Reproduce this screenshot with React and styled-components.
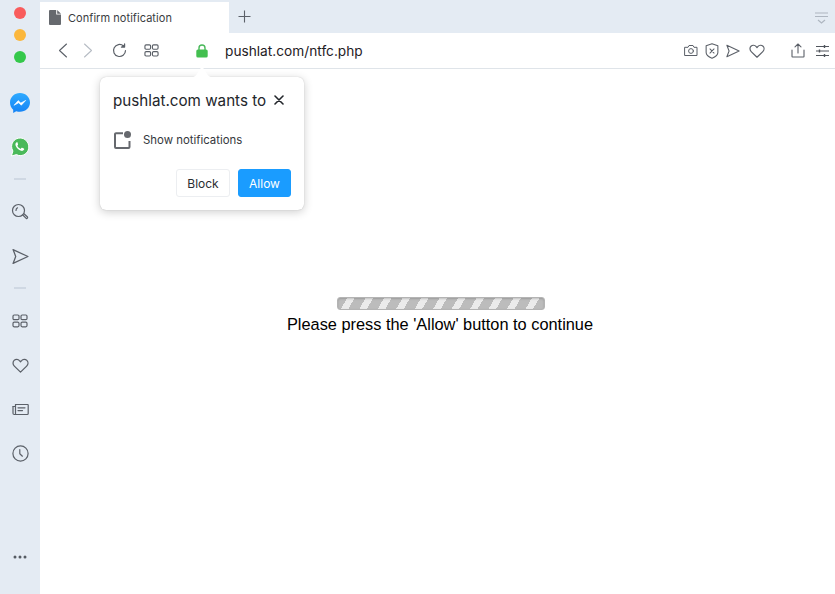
import React from "react";
import styled, { createGlobalStyle } from "styled-components";

const Global = createGlobalStyle`
  html, body { margin: 0; padding: 0; background: #fff; }
  body { font-family: Inter, "Liberation Sans", sans-serif; }
  #root { width: 835px; height: 594px; overflow: hidden; }
`;

const Shell = styled.div`
  display: flex;
  width: 835px;
  height: 594px;
  background: #fff;
`;

const Sidebar = styled.aside`
  width: 40px;
  flex: none;
  height: 594px;
  background: #e4ebf3;
  display: flex;
  flex-direction: column;
  align-items: center;
  padding-top: 7px;
  box-sizing: border-box;
`;

const Lights = styled.div`
  display: flex;
  flex-direction: column;
  gap: 10px;
  flex: none;
`;

const Light = styled.span`
  display: block;
  width: 12px;
  height: 12px;
  border-radius: 50%;
  background: ${(p) => p.$color};
`;

const SideSlot = styled.div`
  width: 40px;
  height: 24px;
  flex: none;
  display: flex;
  align-items: center;
  justify-content: center;
  margin-top: ${(p) => p.$top ?? 20}px;
`;

const Dash = styled.span`
  width: 12px;
  height: 2px;
  background: #cfd8e3;
  flex: none;
  margin-top: ${(p) => p.$top}px;
`;

const Main = styled.div`
  flex: 1;
  display: flex;
  flex-direction: column;
  min-width: 0;
`;

const TabBar = styled.div`
  height: 33px;
  flex: none;
  background: #e4ebf3;
  display: flex;
  align-items: flex-end;
`;

const Tab = styled.div`
  width: 189px;
  height: 31px;
  background: #fff;
  display: flex;
  align-items: center;
  padding-left: 9px;
  gap: 7px;
  box-sizing: border-box;
  font-size: 11px;
  color: #3a3d42;
  letter-spacing: 0.05px;
`;

const NewTab = styled.div`
  width: 31px;
  height: 31px;
  padding-bottom: 3px;
  box-sizing: border-box;
  display: flex;
  align-items: center;
  justify-content: center;
`;

const TabMenu = styled.div`
  margin-left: auto;
  margin-right: 6px;
  height: 31px;
  display: flex;
  align-items: center;
`;

const Toolbar = styled.div`
  height: 36px;
  flex: none;
  box-sizing: border-box;
  border-bottom: 1px solid #dfe4e9;
  display: flex;
  align-items: center;
  padding-left: 15px;
  padding-right: 6px;
`;

const ToolIcon = styled.div`
  display: flex;
  align-items: center;
  justify-content: center;
  width: ${(p) => p.$w ?? 16}px;
  height: 18px;
  flex: none;
  margin-right: ${(p) => p.$mr ?? 0}px;
`;

const Address = styled.div`
  font-size: 13.7px;
  color: #1e2024;
  flex: 1;
  margin-left: 17px;
`;

const Content = styled.main`
  flex: 1;
  position: relative;
  display: flex;
  flex-direction: column;
  align-items: center;
  padding-top: 228px;
  padding-left: 7px;
  font-family: "Liberation Sans", Arial, sans-serif;
`;

const Progress = styled.div`
  width: 208px;
  height: 13px;
  box-sizing: border-box;
  border: 1px solid #b4b4b4;
  border-radius: 3px;
  background: repeating-linear-gradient(-60deg, #bcbcbc 0 9.5px, #ebebeb 9.5px 16px);
  box-shadow: inset 0 1px 2px rgba(0, 0, 0, 0.18);
`;

const Message = styled.div`
  font-size: 16.35px;
  line-height: 18px;
  color: #000;
  margin-top: 5px;
  margin-left: -2px;
`;

const Popup = styled.div`
  position: absolute;
  left: 60px;
  top: 8px;
  width: 204px;
  height: 133px;
  box-sizing: border-box;
  background: #fff;
  border-radius: 6px;
  box-shadow: 0 2px 10px rgba(0, 0, 0, 0.2), 0 0 1px rgba(0, 0, 0, 0.25);
  padding: 13px;
  display: flex;
  flex-direction: column;
  font-family: Inter, "Liberation Sans", sans-serif;
`;

const Arrow = styled.svg`
  position: absolute;
  left: 86px;
  top: -12px;
`;

const PopupHead = styled.div`
  display: flex;
  align-items: center;
  justify-content: space-between;
  height: 20px;
  padding-right: 7px;
  font-size: 15.2px;
  color: #23262b;
`;

const Permission = styled.div`
  display: flex;
  align-items: center;
  gap: 12px;
  margin-top: 20px;
  height: 20px;
  margin-left: 1px;
  font-size: 11.4px;
  color: #34373c;
`;

const Actions = styled.div`
  margin-top: auto;
  display: flex;
  justify-content: flex-end;
  gap: 8px;
`;

const Btn = styled.button`
  height: 28px;
  width: ${(p) => (p.$primary ? 53 : 54)}px;
  padding: 0;
  border-radius: 3px;
  box-sizing: border-box;
  border: 1px solid ${(p) => (p.$primary ? "#1a9cff" : "#eceef1")};
  background: ${(p) => (p.$primary ? "#1a9cff" : "#fff")};
  color: ${(p) => (p.$primary ? "#fff" : "#2a2d31")};
  font-family: inherit;
  font-size: 12px;
`;

const S = { fill: "none", stroke: "#5b6068", strokeWidth: 1.2, strokeLinecap: "round", strokeLinejoin: "round" };

const Send = ({ size = 16 }) => (
  <svg width={size} height={size} viewBox="0 0 16 16" {...S}>
    <path d="M1 1.5 15 8 1 14.5 3.5 8Z" />
  </svg>
);
const Heart = ({ size = 16 }) => (
  <svg width={size} height={size} viewBox="0 0 16 16" {...S}>
    <path d="M8 14.2 2.2 8.6C.6 7 .6 4.6 2 3.2c1.5-1.4 3.8-1.2 5 .2l1 1.1 1-1.1c1.2-1.4 3.5-1.6 5-.2 1.4 1.4 1.4 3.8-.2 5.4Z" />
  </svg>
);
const Grid = ({ size = 16 }) => (
  <svg width={size} height={size} viewBox="0 0 16 16" {...S}>
    <rect x="1" y="2" width="6" height="4.6" rx="1.2" />
    <rect x="9" y="2" width="6" height="4.6" rx="1.2" />
    <rect x="1" y="9.2" width="6" height="4.6" rx="1.2" />
    <rect x="9" y="9.2" width="6" height="4.6" rx="1.2" />
  </svg>
);

export default function App() {
  return (
    <>
      <Global />
      <Shell>
        <Sidebar>
          <Lights>
            <Light $color="#f95c5c" />
            <Light $color="#fbb73c" />
            <Light $color="#34c84a" />
          </Lights>
          <SideSlot $top={28}>
            <svg width="20" height="20" viewBox="0 0 20 20">
              <defs>
                <linearGradient id="ms" x1="0" y1="0" x2="0" y2="1">
                  <stop offset="0" stopColor="#2eaaff" />
                  <stop offset="1" stopColor="#1583f5" />
                </linearGradient>
              </defs>
              <path d="M10 0C4.4 0 0 4.1 0 9.6c0 2.9 1.2 5.4 3.2 7.1v3.2l3-1.7c1.2.4 2.5.6 3.8.6 5.6 0 10-4.1 10-9.2C20 4.1 15.6 0 10 0Z" fill="url(#ms)" />
              <path d="M4 12.3 8.2 7.6l2.6 2.4 4.9-2.6-4.4 4.8-2.6-2.4Z" fill="#fff" stroke="#fff" strokeWidth=".6" strokeLinejoin="round" />
            </svg>
          </SideSlot>
          <SideSlot>
            <svg width="20" height="20" viewBox="0 0 20 20">
              <path d="M10.2 1C5.4 1 1.6 4.8 1.6 9.5c0 1.6.5 3.1 1.3 4.5L1.4 19l5.1-1.4c1.2.7 2.4 1 3.7 1 4.8 0 8.6-3.8 8.6-8.6S15 1 10.2 1Z" fill="#4ab95a" stroke="#fff" strokeWidth="1" />
              <path d="M7.6 5.6c-.3-.5-.9-.4-1.2-.1-.9.7-1.2 1.8-.8 3 .8 2.5 3 4.6 5.6 5.3 1.1.3 2.2-.1 2.8-1 .3-.4.3-1-.2-1.2l-1.6-.8c-.4-.1-.7 0-.9.3l-.6.8c-1.5-.5-2.8-1.7-3.4-3.1l.6-.7c.2-.3.2-.6.1-.9Z" fill="#fff" />
            </svg>
          </SideSlot>
          <Dash $top={19} />
          <SideSlot $top={20}>
            <svg width="18" height="18" viewBox="0 0 18 18" {...S}>
              <circle cx="7.5" cy="7.5" r="6" />
              <path d="M5 7.5a3 3 0 0 1 1.5-2.7" />
              <path d="m11.8 12 3.4 3.4a1 1 0 0 0 1.3-1.4L13 10.8" />
            </svg>
          </SideSlot>
          <SideSlot>
            <Send size={17} />
          </SideSlot>
          <Dash $top={19} />
          <SideSlot $top={20}>
            <Grid />
          </SideSlot>
          <SideSlot>
            <Heart size={17} />
          </SideSlot>
          <SideSlot>
            <svg width="17" height="17" viewBox="0 0 17 17" {...S}>
              <path d="M3.5 3.5h12.2c.3 0 .5.2.5.5v8.5c0 .6-.4 1-1 1H2.2c-.7 0-1.2-.5-1.2-1.2V5.5" />
              <path d="M3.5 3.5v9.5M6 6.8h7M6 9.6h4.5M1 5.5h2.5" />
            </svg>
          </SideSlot>
          <SideSlot>
            <svg width="17" height="17" viewBox="0 0 17 17" {...S}>
              <circle cx="8.5" cy="8.5" r="7.6" />
              <path d="M7.8 4.6v4.2l2.6 2.4" />
            </svg>
          </SideSlot>
          <SideSlot $top={80}>
            <svg width="16" height="4" viewBox="0 0 16 4">
              <circle cx="3" cy="2" r="1.5" fill="#565b62" />
              <circle cx="8" cy="2" r="1.5" fill="#565b62" />
              <circle cx="13" cy="2" r="1.5" fill="#565b62" />
            </svg>
          </SideSlot>
        </Sidebar>
        <Main>
          <TabBar>
            <Tab>
              <svg width="12" height="15" viewBox="0 0 12 15">
                <path d="M1 0h6.2v4.6H12V14a1 1 0 0 1-1 1H1a1 1 0 0 1-1-1V1a1 1 0 0 1 1-1Z" fill="#66696e" />
                <path d="M8.2 0 12 3.7H8.2Z" fill="#66696e" />
              </svg>
              Confirm notification
            </Tab>
            <NewTab>
              <svg width="13" height="13" viewBox="0 0 13 13" fill="none" stroke="#5b6068" strokeWidth="1.1">
                <path d="M6.5 0.5v12M.5 6.5h12" />
              </svg>
            </NewTab>
            <TabMenu>
              <svg width="14" height="12" viewBox="0 0 14 12" fill="none" stroke="#aeb6c0" strokeWidth="1.2">
                <path d="M0 1h13M0 4.5h13M3 8l3.5 3L10 8" />
              </svg>
            </TabMenu>
          </TabBar>
          <Toolbar>
            <ToolIcon $w={16} $mr={9}>
              <svg width="10" height="15" viewBox="0 0 10 15" {...S} strokeWidth="1.1">
                <path d="M8.5 1 1.5 7.5l7 6.5" />
              </svg>
            </ToolIcon>
            <ToolIcon $w={16} $mr={15}>
              <svg width="10" height="15" viewBox="0 0 10 15" {...S} stroke="#b6bcc4" strokeWidth="1.1">
                <path d="M1.5 1l7 6.5-7 6.5" />
              </svg>
            </ToolIcon>
            <ToolIcon $w={16} $mr={16}>
              <svg width="15" height="15" viewBox="0 0 15 15" {...S}>
                <path d="M13.5 7.5a6 6 0 1 1-2-4.5" />
                <path d="M12.6 .9v3.2H9.4" fill="#5b6068" />
              </svg>
            </ToolIcon>
            <ToolIcon $w={16} $mr={37}>
              <Grid size={15} />
            </ToolIcon>
            <ToolIcon $w={12}>
              <svg width="12" height="14" viewBox="0 0 12 14">
                <path d="M3 6V4a3 3 0 0 1 6 0v2" fill="none" stroke="#49b85a" strokeWidth="1.4" />
                <rect x="0.3" y="5.4" width="11.4" height="8.2" rx="1.6" fill="#43bf50" />
              </svg>
            </ToolIcon>
            <Address>pushlat.com/ntfc.php</Address>
            <ToolIcon $w={14} $mr={7}>
              <svg width="14" height="13" viewBox="0 0 14 13" {...S} strokeWidth="1">
                <path d="M1 3.3h3l1-1.8h4l1 1.8h3v8.2H1Z" />
                <circle cx="7" cy="7" r="2.4" />
              </svg>
            </ToolIcon>
            <ToolIcon $w={14} $mr={7}>
              <svg width="14" height="16" viewBox="0 0 13 15" {...S} strokeWidth="1">
                <path d="M6.5.8 12 2.6v6.2c0 2.2-2.6 4.2-5.5 5.4C3.6 13 1 11 1 8.8V2.6Z" />
                <path d="m4.6 5.6 3.8 3.8M8.4 5.6 4.6 9.4" />
              </svg>
            </ToolIcon>
            <ToolIcon $w={14} $mr={9}>
              <Send size={14} />
            </ToolIcon>
            <ToolIcon $w={16} $mr={26}>
              <Heart size={16} />
            </ToolIcon>
            <ToolIcon $w={14} $mr={10}>
              <svg width="14" height="15" viewBox="0 0 14 15" {...S} strokeWidth="1.1">
                <path d="M7 10V1M4 3.8 7 1l3 2.8M1 7v6.5c0 .3.2.5.5.5h11c.3 0 .5-.2.5-.5V7" />
              </svg>
            </ToolIcon>
            <ToolIcon $w={14}>
              <svg width="13" height="12" viewBox="0 0 13 12" fill="none" stroke="#50555c" strokeWidth="1">
                <path d="M0 1.5h13M0 6h13M0 10.5h13" />
                <path d="M8.5 0v3M3.5 4.5v3M8.5 9v3" strokeWidth="1.4" />
              </svg>
            </ToolIcon>
          </Toolbar>
          <Content>
            <Progress />
            <Message>Please press the 'Allow' button to continue</Message>
            <Popup>
              <Arrow width="32" height="13" viewBox="0 0 32 13">
                <path d="M0 13c6 0 9-1 11-4l5-8 5 8c2 3 5 4 11 4Z" fill="#fff" />
              </Arrow>
              <PopupHead>
                pushlat.com wants to
                <svg width="10" height="10" viewBox="0 0 10 10" stroke="#23262b" strokeWidth="1.6" strokeLinecap="round">
                  <path d="M1 1l8 8M9 1 1 9" />
                </svg>
              </PopupHead>
              <Permission>
                <svg width="17" height="18" viewBox="0 0 17 18">
                  <path d="M9 2.2H2a1 1 0 0 0-1 1V16a1 1 0 0 0 1 1h12.5a1 1 0 0 0 1-1V10" fill="none" stroke="#66696e" strokeWidth="2" />
                  <circle cx="13.5" cy="3.5" r="3.5" fill="#66696e" />
                </svg>
                Show notifications
              </Permission>
              <Actions>
                <Btn>Block</Btn>
                <Btn $primary>Allow</Btn>
              </Actions>
            </Popup>
          </Content>
        </Main>
      </Shell>
    </>
  );
}
